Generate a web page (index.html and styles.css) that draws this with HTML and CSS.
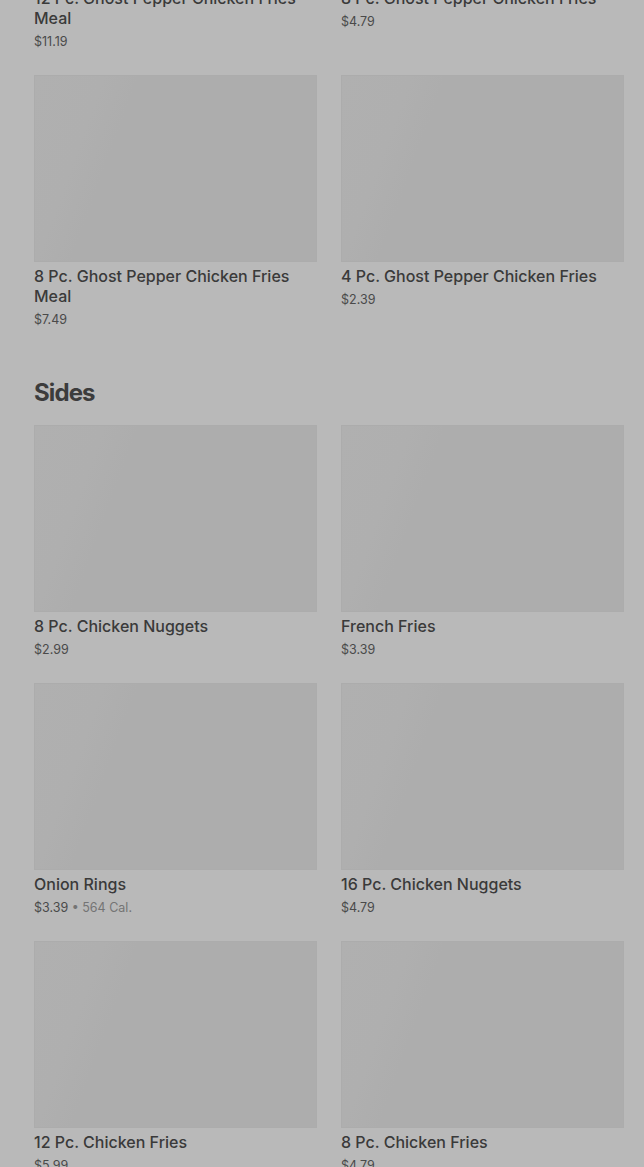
FILE: index.html
```html
<!DOCTYPE html>
<html lang="en">
<head>
<meta charset="utf-8">
<title>Menu</title>
<link rel="stylesheet" href="styles.css">
</head>
<body>
<main class="menu">
  <section class="section section--scrolled">
    <div class="grid">
      <div class="card"><div class="thumb"></div><div class="name">12 Pc. Ghost Pepper Chicken Fries Meal</div><div class="meta">$11.19</div></div>
      <div class="card"><div class="thumb"></div><div class="name">8 Pc. Ghost Pepper Chicken Fries</div><div class="meta">$4.79</div></div>
      <div class="card"><div class="thumb"></div><div class="name">8 Pc. Ghost Pepper Chicken Fries Meal</div><div class="meta">$7.49</div></div>
      <div class="card"><div class="thumb"></div><div class="name">4 Pc. Ghost Pepper Chicken Fries</div><div class="meta">$2.39</div></div>
    </div>
  </section>
  <section class="section">
    <h2 class="heading">Sides</h2>
    <div class="grid">
      <div class="card"><div class="thumb"></div><div class="name">8 Pc. Chicken Nuggets</div><div class="meta">$2.99</div></div>
      <div class="card"><div class="thumb"></div><div class="name">French Fries</div><div class="meta">$3.39</div></div>
      <div class="card"><div class="thumb"></div><div class="name">Onion Rings</div><div class="meta">$3.39 <span class="cal">• 564 Cal.</span></div></div>
      <div class="card"><div class="thumb"></div><div class="name">16 Pc. Chicken Nuggets</div><div class="meta">$4.79</div></div>
      <div class="card"><div class="thumb"></div><div class="name">12 Pc. Chicken Fries</div><div class="meta">$5.99</div></div>
      <div class="card"><div class="thumb"></div><div class="name">8 Pc. Chicken Fries</div><div class="meta">$4.79</div></div>
    </div>
  </section>
</main>
</body>
</html>
```

FILE: styles.css
```css
html, body {
  margin: 0;
  padding: 0;
  background: #b9b9b9;
  overflow: hidden;
}
body {
  font-family: Inter, Roboto, "Liberation Sans", Arial, sans-serif;
  color: #3a3a3a;
}
.menu {
  padding: 0 20px 0 34px;
}
.section--scrolled {
  margin-top: -203px;
}
.heading {
  margin: 45px 0 16px;
  font-size: 24px;
  line-height: 32px;
  font-weight: 700;
  color: #3c3c3c;
  letter-spacing: -0.9px;
}
.grid {
  display: grid;
  grid-template-columns: 283px 283px;
  column-gap: 24px;
  row-gap: 21px;
}
.card {
  display: flex;
  flex-direction: column;
}
.thumb {
  height: 187px;
  background: linear-gradient(110deg, #b0b0b0 0%, #afafaf 20%, #adadad 30%, #adadad 100%);
  box-shadow: inset 0 0 0 1px #acacac;
}
.name {
  margin-top: 4px;
  font-size: 16px;
  line-height: 20px;
  font-weight: 500;
  color: #3a3a3a;
}
.meta {
  padding-top: 1px;
  font-size: 12.5px;
  line-height: 25px;
  color: #4a4a4a;
}
.cal {
  color: #747474;
}
```
